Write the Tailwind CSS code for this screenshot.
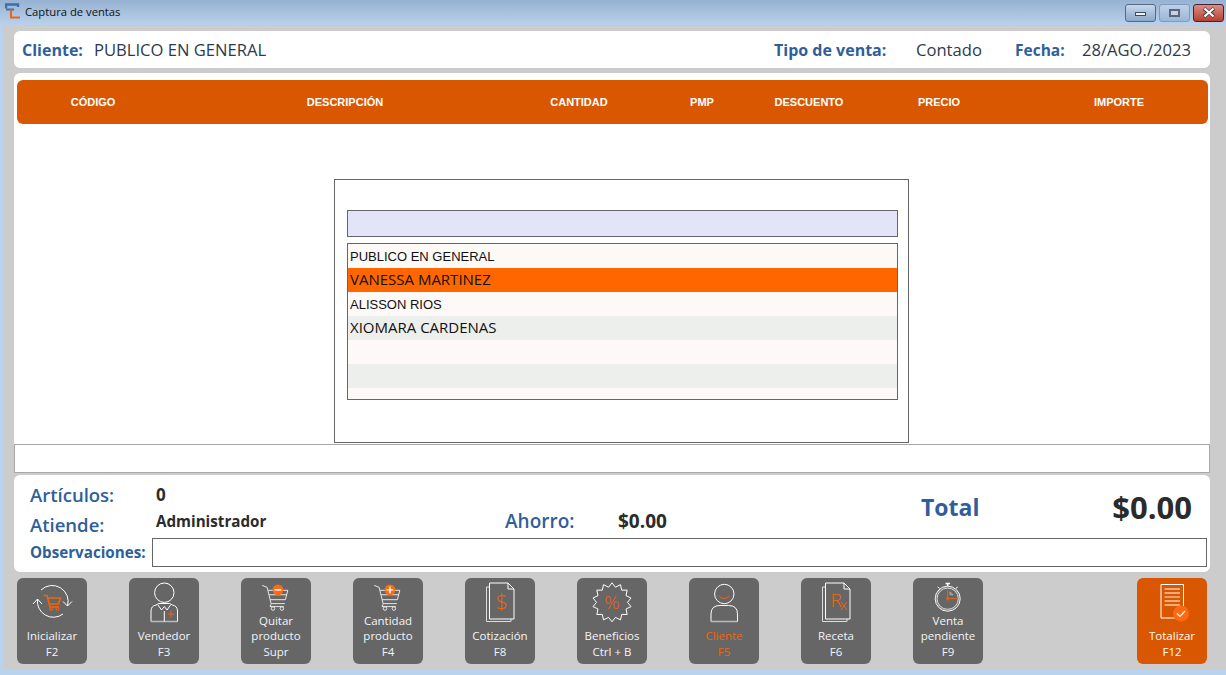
<!DOCTYPE html>
<html lang="es">

<head>
    <meta charset="UTF-8">
    <title>Captura de ventas</title>
    <script src="https://cdn.jsdelivr.net/npm/@tailwindcss/browser@4"></script>
</head>

<body class="bg-[#b9d2ee] overflow-hidden font-['Open_Sans',sans-serif]">
    <div class="w-[1226px] h-[675px] flex flex-col">

        <!-- title bar -->
        <div class="h-[25px] shrink-0 flex items-center bg-gradient-to-b from-[#97b2d2] to-[#b9d1ec] pl-[5px] pr-[2px]">
            <svg class="w-[16px] h-[16px] -mt-[3px]" viewBox="0 0 16 16" fill="none">
                <path d="M1 5.5V1.5H13V4" stroke="#3f6cae" stroke-width="2.4" />
                <path d="M1 6.5H9" stroke="#3f6cae" stroke-width="2" />
                <path d="M15 14.5H6V6.5" stroke="#ee6412" stroke-width="2" />
            </svg>
            <span class="ml-[4px] text-[11.25px] text-[#111]">Captura de ventas</span>
            <div class="ml-auto flex gap-[3px]">
                <div class="w-[31px] h-[18px] rounded-[3px] border border-[#54698a] bg-gradient-to-b from-[#c7d7ea] to-[#8ba8cb] flex items-center justify-center">
                    <div class="w-[11px] h-[4px] bg-[#eef2f6] border border-[#3d4a5c] mt-[3px]"></div>
                </div>
                <div class="w-[31px] h-[18px] rounded-[3px] border border-[#7f9bbf] bg-gradient-to-b from-[#bed0e7] to-[#9cb7d8] flex items-center justify-center">
                    <div class="w-[11px] h-[8px] border-2 border-[#5a6678] bg-[#c5d3e5]"></div>
                </div>
                <div class="w-[31px] h-[18px] rounded-[3px] border border-[#4c1f2a] bg-gradient-to-b from-[#d98d84] to-[#b8402f] flex items-center justify-center">
                    <svg class="w-[14px] h-[11px]" viewBox="0 0 14 11"><path d="M2 1.5L12 9.5M12 1.5L2 9.5" stroke="#3c3c44" stroke-width="3.6" /><path d="M2.5 1.5L11.5 9.5M11.5 1.5L2.5 9.5" stroke="#fff" stroke-width="2.2" /></svg>
                </div>
            </div>
        </div>

        <!-- window content -->
        <div class="ml-[3px] h-[645px] shrink-0 bg-[#cccccc] pl-[11px] pr-[16px] flex flex-col">

            <div class="mt-[6px] h-[37px] shrink-0 bg-white rounded-[6px] flex items-center pl-[8px] text-[16.6px] text-[#2e3a4a]">
                <span class="w-[72px] text-[16px] font-bold text-[#2f5f99]">Cliente:</span>
                <span class="w-[680px] pt-[2px]">PUBLICO EN GENERAL</span>
                <span class="w-[142px] text-[16px] font-bold text-[#2f5f99]">Tipo de venta:</span>
                <span class="w-[99px] pt-[2px]">Contado</span>
                <span class="w-[67px] pt-[2px] text-[15.5px] font-bold text-[#2f5f99]">Fecha:</span>
                <span class="pt-[2px]">28/AGO./2023</span>
            </div>

            <div class="mt-[5px] h-[371px] shrink-0 bg-white rounded-t-[6px] pt-[7px] px-[3px]">
                <div class="h-[44px] w-[1191px] bg-[#d95700] rounded-[6px] flex items-center text-center text-white text-[11px] font-bold font-['Liberation_Sans',sans-serif]">
                    <span class="w-[152px]">CÓDIGO</span>
                    <span class="w-[352px]">DESCRIPCIÓN</span>
                    <span class="w-[116px]">CANTIDAD</span>
                    <span class="w-[130px]">PMP</span>
                    <span class="w-[84px]">DESCUENTO</span>
                    <span class="w-[176px]">PRECIO</span>
                    <span class="w-[181px] pl-[3px]">IMPORTE</span>
                </div>

                <!-- client picker -->
                <div class="ml-[317px] mt-[55px] w-[575px] h-[264px] border border-[#666] bg-white pt-[30px] px-[12px]">
                    <div class="h-[27px] w-[551px] border border-[#666] bg-[#e4e4f8]"></div>
                    <div class="mt-[6px] h-[157px] w-[551px] border border-[#666] bg-[#fdf9f7] overflow-hidden text-[#111]">
                        <div class="h-[24px] flex items-center pl-[2px] pt-[1px] text-[13px] font-['Liberation_Sans',sans-serif]">PUBLICO EN GENERAL</div>
                        <div class="h-[24px] flex items-center pl-[2px] pb-[2px] text-[15px] bg-[#ff6600]">VANESSA MARTINEZ</div>
                        <div class="h-[24px] flex items-center pl-[2px] pt-[1px] text-[13px] font-['Liberation_Sans',sans-serif]">ALISSON RIOS</div>
                        <div class="h-[24px] flex items-center pl-[2px] pb-[2px] text-[15px] bg-[#edefec]">XIOMARA CARDENAS</div>
                        <div class="h-[24px]"></div>
                        <div class="h-[24px] bg-[#edefec]"></div>
                    </div>
                </div>
            </div>

            <div class="h-[29px] shrink-0 bg-white border border-[#a8a8a8]"></div>

            <!-- totals -->
            <div class="mt-[2px] h-[97px] shrink-0 bg-white rounded-[6px] pl-[16px] pr-[3px] pt-[5px]">
                <div class="grid grid-cols-[126px_349px_113px_303px_1fr] grid-rows-[30px_29px] text-[#2b2b2b]">
                    <span class="text-[18.5px] font-semibold text-[#2f5f99] leading-[30px]">Artículos:</span>
                    <span class="text-[17px] font-bold leading-[30px] col-span-3">0</span>
                    <div class="row-span-2 flex items-center justify-between pr-[15px] pb-[5px]">
                        <span class="text-[23px] font-bold text-[#2f5f99]">Total</span>
                        <span class="text-[31px] font-bold">$0.00</span>
                    </div>
                    <span class="text-[18.5px] font-semibold text-[#2f5f99] leading-[30px]">Atiende:</span>
                    <span class="text-[15.2px] font-bold leading-[22px]">Administrador</span>
                    <span class="text-[19px] font-semibold text-[#2f5f99] leading-[22px]">Ahorro:</span>
                    <span class="text-[19px] font-bold leading-[22px]">$0.00</span>
                </div>
                <div class="-mt-[1px] flex items-center">
                    <span class="w-[122px] text-[15.2px] font-bold text-[#2f5f99]">Observaciones:</span>
                    <div class="h-[29px] flex-1 border border-[#666]"></div>
                </div>
            </div>

            <!-- action buttons -->
            <div class="mt-[6px] h-[86px] shrink-0 flex pl-[3px] pr-[3px] gap-[42px] text-[11.5px] leading-[15.5px] text-center text-[#f2f5f8]">

                <div class="w-[70px] h-[86px] rounded-[6px] bg-[#666666] flex flex-col">
                    <svg class="w-[70px] h-[48px]" viewBox="0 0 70 48" fill="none">
                        <path d="M46 36A16 16 0 0 1 20.5 21" stroke="#fff" />
                        <path d="M16 26L20.5 21L25 26" stroke="#fff" />
                        <path d="M24 12A16 16 0 0 1 50.5 28" stroke="#fff" />
                        <path d="M46 23.5L50.5 28L55 23.5" stroke="#fff" />
                        <path d="M26.5 17.5H30L33 29H42M31 20H43.5L41.5 26H32.5" stroke="#f0650e" stroke-width="1.6" />
                        <circle cx="34" cy="31" r="1.4" stroke="#f0650e" />
                        <circle cx="40.5" cy="31" r="1.4" stroke="#f0650e" />
                    </svg>
                    <span class="mt-auto pb-[5px]">Inicializar<br>F2</span>
                </div>

                <div class="w-[70px] h-[86px] rounded-[6px] bg-[#666666] flex flex-col">
                    <svg class="w-[70px] h-[48px]" viewBox="0 0 70 48" fill="none">
                        <circle cx="35.3" cy="14.7" r="9.7" stroke="#fff" />
                        <path d="M22 43.5V33Q22 28 27 27L30 25.5H40.5L43.5 27Q48.5 28 48.5 33V43.5Z" stroke="#fff" />
                        <path d="M22 43.5H48.5" stroke="#bbb" stroke-width="1.5" />
                        <path d="M35.3 33V43.5M29 27L32.5 32L35.3 28.5L38 32L41.5 27" stroke="#fff" />
                        <path d="M42 32.5V39M39 36H45" stroke="#f0650e" />
                    </svg>
                    <span class="mt-auto pb-[5px]">Vendedor<br>F3</span>
                </div>

                <div class="w-[70px] h-[86px] rounded-[6px] bg-[#666666] flex flex-col">
                    <svg class="w-[70px] h-[35px]" viewBox="0 0 70 35" fill="none">
                        <path d="M21 7.5L26 9.5L30 26H44M27 12.5H47L44.5 22H29" stroke="#e8e8e8" />
                        <path d="M28 17H46M30 26.5L29 29H43" stroke="#e8e8e8" />
                        <circle cx="32" cy="31" r="1.8" stroke="#e8e8e8" />
                        <circle cx="41" cy="31" r="1.8" stroke="#e8e8e8" />
                        <circle cx="37" cy="12" r="5.5" fill="#ff6a10" />
                        <path d="M33.5 12H40.5" stroke="#fff" stroke-width="1.6" />
                    </svg>
                    <span class="mt-auto pb-[5px]">Quitar<br>producto<br>Supr</span>
                </div>

                <div class="w-[70px] h-[86px] rounded-[6px] bg-[#666666] flex flex-col">
                    <svg class="w-[70px] h-[35px]" viewBox="0 0 70 35" fill="none">
                        <path d="M21 7.5L26 9.5L30 26H44M27 12.5H47L44.5 22H29" stroke="#e8e8e8" />
                        <path d="M28 17H46M30 26.5L29 29H43" stroke="#e8e8e8" />
                        <circle cx="32" cy="31" r="1.8" stroke="#e8e8e8" />
                        <circle cx="41" cy="31" r="1.8" stroke="#e8e8e8" />
                        <circle cx="37" cy="12" r="5.5" fill="#ff6a10" />
                        <path d="M33.5 12H40.5M37 8.5V15.5" stroke="#fff" stroke-width="1.4" />
                    </svg>
                    <span class="mt-auto pb-[5px]">Cantidad<br>producto<br>F4</span>
                </div>

                <div class="w-[70px] h-[86px] rounded-[6px] bg-[#666666] flex flex-col">
                    <svg class="w-[70px] h-[48px]" viewBox="0 0 70 48" fill="none">
                        <path d="M24 9H21.5V43.5H46V41" stroke="#ddd" />
                        <path d="M24.5 5H43L49 11V41H24.5Z" stroke="#fff" />
                        <path d="M43 5V11H49" stroke="#fff" />
                        <text x="36.7" y="31" text-anchor="middle" font-size="22" font-weight="300" fill="#f0650e" font-family="'Open Sans',sans-serif">$</text>
                    </svg>
                    <span class="mt-auto pb-[5px]">Cotización<br>F8</span>
                </div>

                <div class="w-[70px] h-[86px] rounded-[6px] bg-[#666666] flex flex-col">
                    <svg class="w-[70px] h-[48px]" viewBox="0 0 70 48" fill="none">
                        <polygon stroke="#fff" points="35,4.8 38.4,9.2 43.5,6.7 44.7,12.2 50.2,12.1 49,17.6 54,20 50.5,24.3 54,28.6 49,31 50.2,36.5 44.7,36.4 43.5,41.9 38.4,39.4 35,43.8 31.6,39.4 26.5,41.9 25.3,36.4 19.8,36.5 21,31 16,28.6 19.5,24.3 16,20 21,17.6 19.8,12.1 25.3,12.2 26.5,6.7 31.6,9.2" />
                        <text x="35" y="31.3" text-anchor="middle" font-size="19" font-weight="300" fill="#f0650e" font-family="'Open Sans',sans-serif">%</text>
                    </svg>
                    <span class="mt-auto pb-[5px]">Beneficios<br>Ctrl + B</span>
                </div>

                <div class="w-[70px] h-[86px] rounded-[6px] bg-[#666666] flex flex-col text-[#f0650e]">
                    <svg class="w-[70px] h-[48px]" viewBox="0 0 70 48" fill="none">
                        <circle cx="35.3" cy="16" r="9.7" stroke="#fff" />
                        <path d="M30 18Q35 23 40.5 18" stroke="#f0650e" />
                        <path d="M22 43.5V36Q22 27.5 31 27.5H39.5Q48.5 27.5 48.5 36V43.5Z" stroke="#fff" />
                        <path d="M22 43.5H48.5" stroke="#bbb" stroke-width="1.5" />
                    </svg>
                    <span class="mt-auto pb-[5px]">Cliente<br>F5</span>
                </div>

                <div class="w-[70px] h-[86px] rounded-[6px] bg-[#666666] flex flex-col">
                    <svg class="w-[70px] h-[48px]" viewBox="0 0 70 48" fill="none">
                        <path d="M24 9H21.5V43.5H46V41" stroke="#ddd" />
                        <path d="M24.5 5H43L49 11V41H24.5Z" stroke="#fff" />
                        <path d="M43 5V11H49" stroke="#fff" />
                        <text x="29.5" y="28.7" font-size="19" font-weight="300" fill="#f0650e" font-family="'Open Sans',sans-serif">R<tspan font-size="15" dx="-2" dy="3.3">x</tspan></text>
                    </svg>
                    <span class="mt-auto pb-[5px]">Receta<br>F6</span>
                </div>

                <div class="w-[70px] h-[86px] rounded-[6px] bg-[#666666] flex flex-col">
                    <svg class="w-[70px] h-[35px]" viewBox="0 0 70 35" fill="none">
                        <circle cx="34.7" cy="21" r="12.7" stroke="#fff" />
                        <circle cx="34.7" cy="21" r="10.8" stroke="#ddd" />
                        <circle cx="34.7" cy="21" r="11.75" stroke="#bbb" stroke-width="1" stroke-dasharray="1.2 1.2" />
                        <path d="M32.5 5.5H37M34.7 5.5V8" stroke="#fff" stroke-width="1.6" />
                        <path d="M24.5 9L26.5 10.5M45 9L43 10.5" stroke="#fff" />
                        <path d="M34.7 21V12M34.7 21H44" stroke="#f0650e" />
                        <path d="M37 14L40 17H37Z" stroke="#ccc" stroke-width="0.7" />
                        <circle cx="34.7" cy="21" r="1.3" stroke="#f0650e" />
                    </svg>
                    <span class="mt-auto pb-[5px]">Venta<br>pendiente<br>F9</span>
                </div>

                <div class="ml-auto w-[70px] h-[86px] rounded-[6px] bg-[#d95700] flex flex-col text-white">
                    <svg class="w-[70px] h-[48px]" viewBox="0 0 70 48" fill="none">
                        <path d="M24 6.5H46.5V40H24Z" stroke="#fff" />
                        <path d="M27.5 11H43M27.5 15H43M27.5 23H43M27.5 27H43" stroke="#fff" />
                        <path d="M27.5 19H43" stroke="#f5b48a" stroke-width="1.5" />
                        <circle cx="44" cy="35.5" r="8" fill="#ff6a10" />
                        <path d="M40 35.5L43 38.5L48 33" stroke="#fff" stroke-width="1.2" />
                    </svg>
                    <span class="mt-auto pb-[5px]">Totalizar<br>F12</span>
                </div>
            </div>
        </div>
    </div>
</body>

</html>
